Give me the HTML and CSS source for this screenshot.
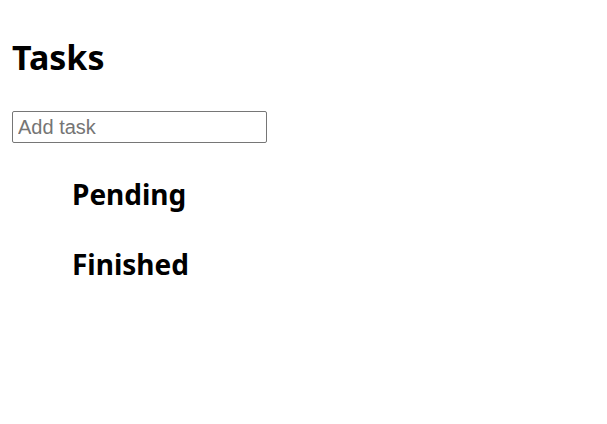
FILE: index.html
```html
<!DOCTYPE html>
<html>
<head>
<meta charset="utf-8">
<link rel="stylesheet" href="styles.css">
</head>
<body>
<div class="app">
  <h1 class="title">Tasks</h1>
  <input class="add" type="text" placeholder="Add task">
  <ul class="lists">
    <li><h2 class="group">Pending</h2></li>
    <li><h2 class="group">Finished</h2></li>
  </ul>
</div>
</body>
</html>
```
FILE: styles.css
```css
html, body { margin: 0; padding: 0; background: #fff; }
body { font-family: "Noto Sans", sans-serif; color: #000; }
.app { padding: 12px; }
.title { font-size: 34px; font-weight: 700; margin: 24px 0 33px; line-height: 42px; }
.add {
  display: block;
  box-sizing: border-box;
  width: 255px; height: 32px;
  font-family: "Liberation Sans", Arial, sans-serif;
  font-size: 20px;
  padding: 0 5px;
  border: 1px solid #767676;
  border-radius: 2px;
}
.add::placeholder { color: #757575; }
.lists { list-style: none; margin: 0; padding: 0 0 0 60px; }
.group { font-size: 28px; font-weight: 700; margin: 32px 0 0; line-height: 38px; }
```
